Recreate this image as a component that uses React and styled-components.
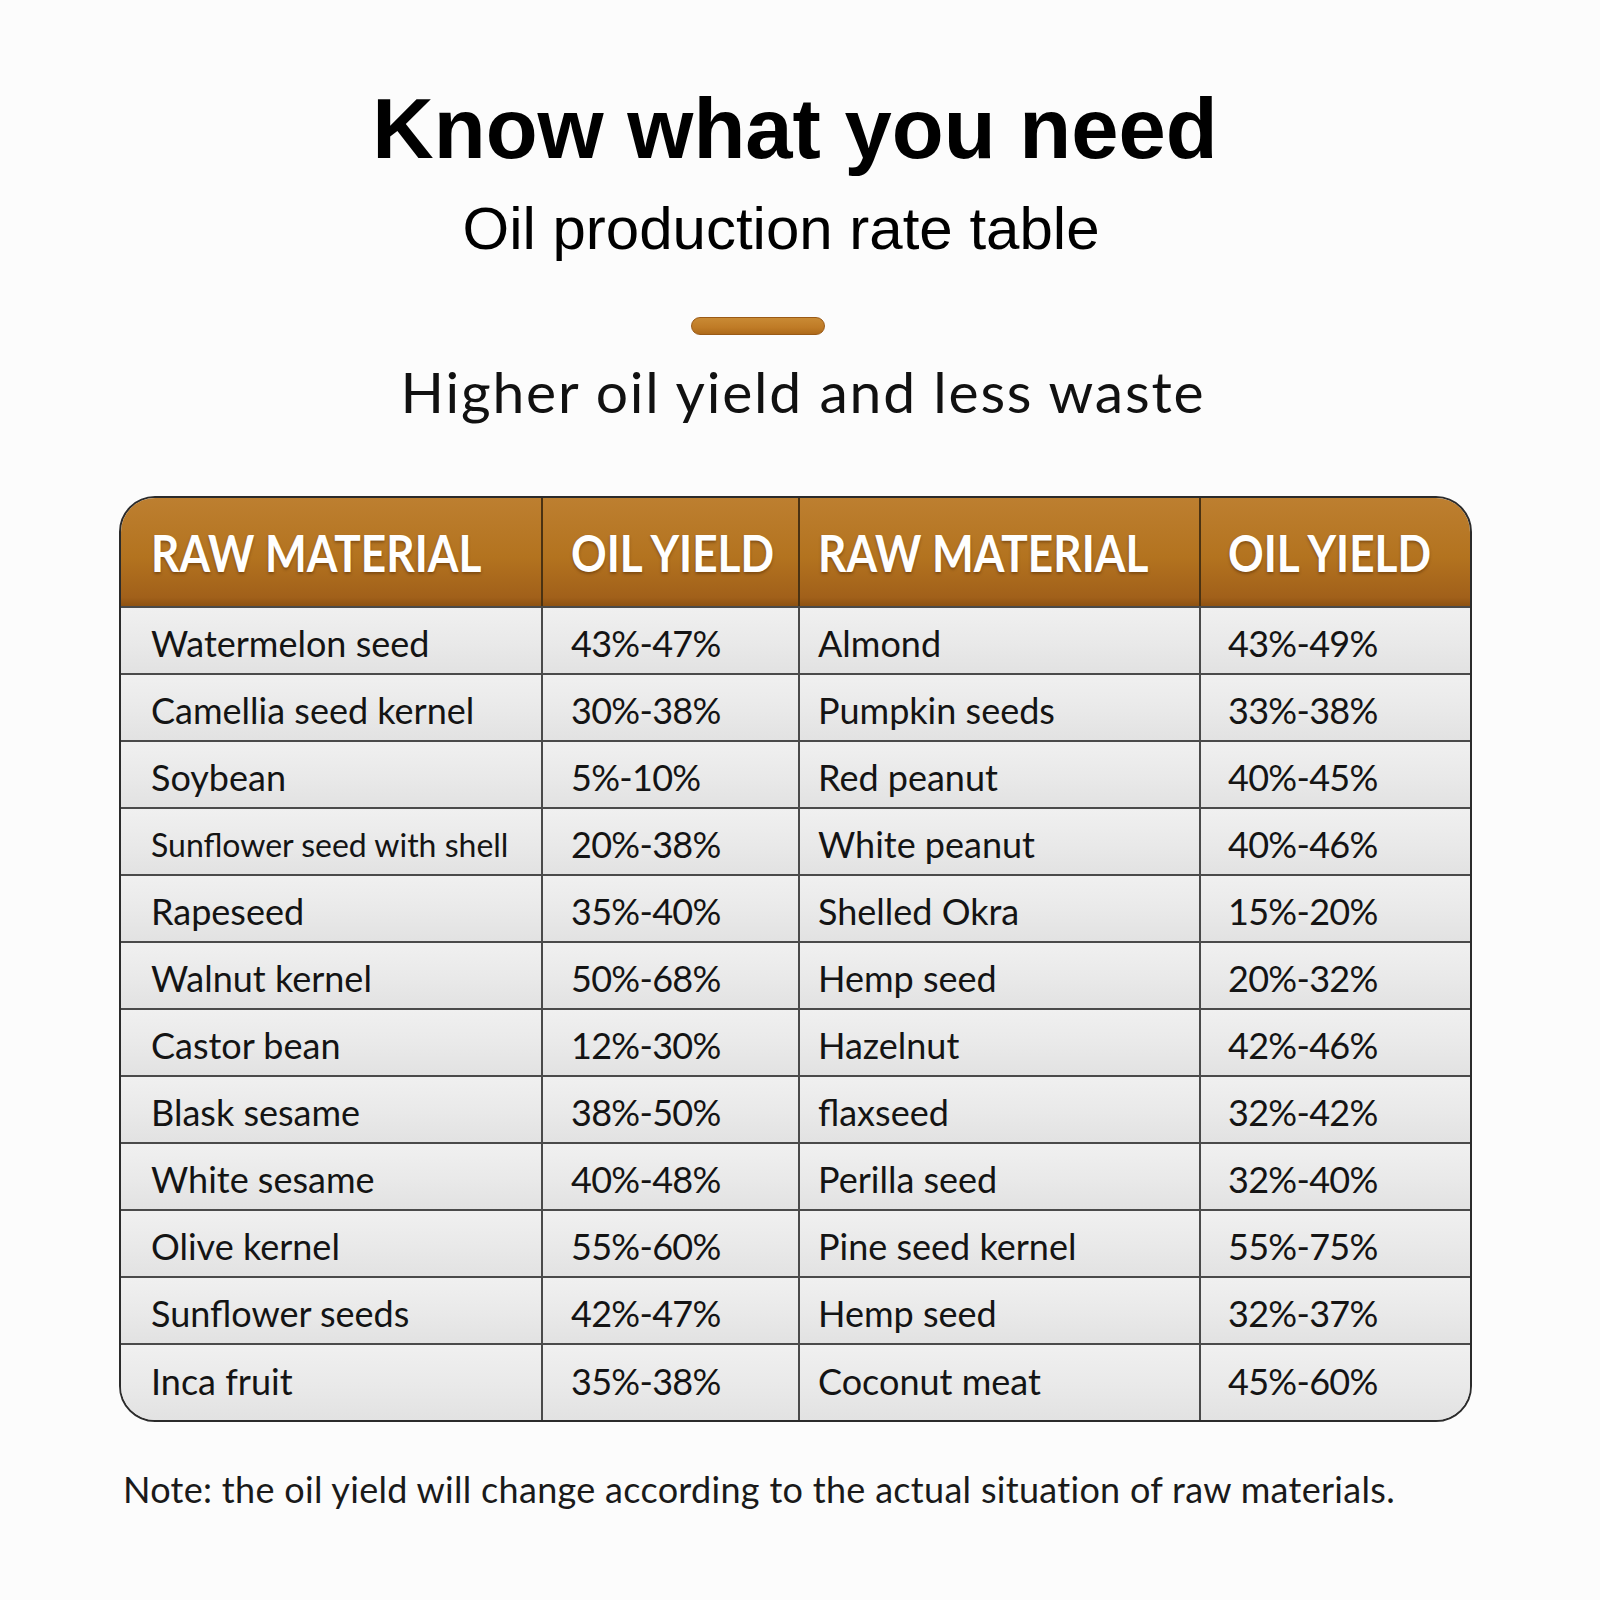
import styled, { createGlobalStyle } from "styled-components";

const GlobalStyle = createGlobalStyle`
  html, body {
    margin: 0;
    padding: 0;
    background: #fcfcfc;
  }
  body {
    font-family: Lato, "Noto Sans", sans-serif;
    color: #111;
  }
`;

const rows = [
  ["Watermelon seed", "43%-47%", "Almond", "43%-49%"],
  ["Camellia seed kernel", "30%-38%", "Pumpkin seeds", "33%-38%"],
  ["Soybean", "5%-10%", "Red peanut", "40%-45%"],
  ["Sunflower seed with shell", "20%-38%", "White peanut", "40%-46%"],
  ["Rapeseed", "35%-40%", "Shelled Okra", "15%-20%"],
  ["Walnut kernel", "50%-68%", "Hemp seed", "20%-32%"],
  ["Castor bean", "12%-30%", "Hazelnut", "42%-46%"],
  ["Blask sesame", "38%-50%", "flaxseed", "32%-42%"],
  ["White sesame", "40%-48%", "Perilla seed", "32%-40%"],
  ["Olive kernel", "55%-60%", "Pine seed kernel", "55%-75%"],
  ["Sunflower seeds", "42%-47%", "Hemp seed", "32%-37%"],
  ["Inca fruit", "35%-38%", "Coconut meat", "45%-60%"],
];

const headers = ["RAW MATERIAL", "OIL YIELD", "RAW MATERIAL", "OIL YIELD"];
const padLeft = [30, 28, 18, 27];

const Page = styled.main`
  width: 1600px;
  height: 1600px;
  display: flex;
  flex-direction: column;
  align-items: center;
  padding-top: 86px;
  box-sizing: border-box;
`;

const Title = styled.h1`
  margin: 0;
  font-family: "Liberation Sans", Arial, sans-serif;
  font-weight: 700;
  font-size: 85px;
  line-height: 85px;
  color: #000;
  transform: translateX(-5px);
`;

const Subtitle = styled.h2`
  margin: 28px 0 0;
  font-family: "Liberation Sans", Arial, sans-serif;
  font-weight: 400;
  font-size: 60px;
  line-height: 60px;
  color: #000;
  transform: translateX(-19px);
`;

const Divider = styled.div`
  margin-top: 58px;
  width: 134px;
  height: 18px;
  border-radius: 9px;
  background: linear-gradient(180deg, #c98a34 0%, #bf7b26 60%, #ae6a1a 100%);
  border: 1px solid #9a5a16;
  box-sizing: border-box;
  transform: translateX(-42px);
`;

const Tagline = styled.p`
  margin: 28px 0 0;
  font-size: 57px;
  line-height: 57px;
  color: #111;
  letter-spacing: 1.8px;
  transform: translateX(3px);
`;

const Table = styled.div`
  margin-top: 76px;
  margin-right: 9px;
  width: 1353px;
  border: 2px solid #2b2b2b;
  border-radius: 36px;
  overflow: hidden;
  box-sizing: border-box;
  display: grid;
  grid-template-columns: 422px 257px 401px 269px;
  background: #e8e8e8;
`;

const HeadCell = styled.div`
  height: 108px;
  display: flex;
  align-items: center;
  padding-left: ${(p) => p.$pad}px;
  box-sizing: border-box;
  background: linear-gradient(180deg, #bd7f30 0%, #b3731f 55%, #a1601a 92%, #8e5212 100%);
  border-right: ${(p) => (p.$last ? "none" : "2px solid #4a3212")};
`;

const HeadLabel = styled.span`
  display: inline-block;
  transform: scaleX(0.85);
  transform-origin: left center;
  color: #fff;
  font-weight: 700;
  font-size: 52px;
  white-space: nowrap;
  text-shadow: 0 2px 3px rgba(70, 35, 0, 0.45);
`;

const Cell = styled.div`
  height: ${(p) => (p.$end ? 77 : 67)}px;
  display: flex;
  align-items: center;
  padding-left: ${(p) => p.$pad}px;
  padding-top: 5px;
  padding-bottom: ${(p) => (p.$end ? 9 : 0)}px;
  box-sizing: border-box;
  background: linear-gradient(180deg, #f0f0f0 0%, #e9e9e9 55%, #e2e2e2 100%);
  border-top: 2px solid #4a4a4a;
  border-right: ${(p) => (p.$last ? "none" : "2px solid #4a4a4a")};
  font-size: ${(p) => (p.$small ? 32 : 36)}px;
  letter-spacing: ${(p) => (p.$num ? "-0.7px" : "0")};
  color: #141414;
  white-space: nowrap;
`;

const Note = styled.p`
  margin: 49px 0 0;
  align-self: flex-start;
  margin-left: 123px;
  font-size: 36px;
  line-height: 36px;
  letter-spacing: 0.3px;
  color: #1a1a1a;
`;

export default function App() {
  return (
    <>
      <GlobalStyle />
      <Page>
        <Title>Know what you need</Title>
        <Subtitle>Oil production rate table</Subtitle>
        <Divider />
        <Tagline>Higher oil yield and less waste</Tagline>
        <Table>
          {headers.map((h, i) => (
            <HeadCell key={"h" + i} $pad={padLeft[i]} $last={i === 3}>
              <HeadLabel>{h}</HeadLabel>
            </HeadCell>
          ))}
          {rows.map((r, ri) =>
            r.map((c, ci) => (
              <Cell
                key={ri + "-" + ci}
                $pad={padLeft[ci]}
                $last={ci === 3}
                $end={ri === rows.length - 1}
                $num={ci % 2 === 1}
                $small={c.length > 22}
              >
                {c}
              </Cell>
            ))
          )}
        </Table>
        <Note>
          Note: the oil yield will change according to the actual situation of raw materials.
        </Note>
      </Page>
    </>
  );
}
